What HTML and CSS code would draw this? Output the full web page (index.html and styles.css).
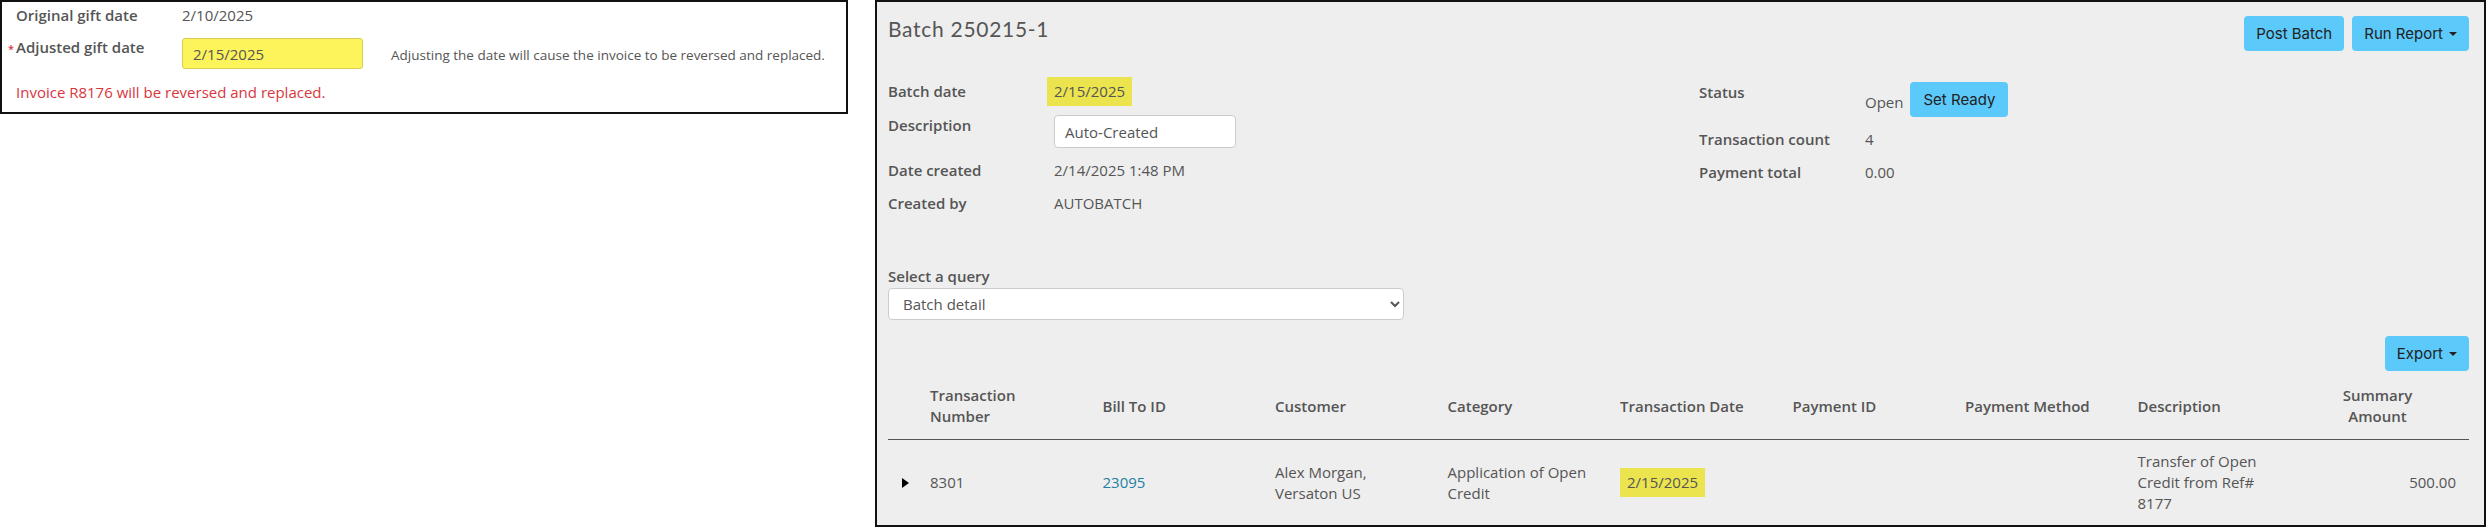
FILE: index.html
```html
<!DOCTYPE html>
<html lang="en">

<head>
  <meta charset="UTF-8" />
  <meta name="viewport" content="width=device-width, initial-scale=1.0" />
  <link rel="stylesheet" href="styles.css">
  <title>Batch 250215-1</title>
</head>

<body>
  <div class="gift-panel">
    <div class="gift-row">
      <span class="gift-label">Original gift date</span>
      <span class="gift-value">2/10/2025</span>
    </div>
    <div class="gift-row adjusted">
      <span class="gift-label required">Adjusted gift date</span>
      <input class="date-input" type="text" value="2/15/2025">
      <span class="gift-help">Adjusting the date will cause the invoice to be reversed and replaced.</span>
    </div>
    <div class="gift-warning">Invoice R8176 will be reversed and replaced.</div>
  </div>

  <div class="batch-panel">
    <div class="batch-header">
      <h1 class="batch-title">Batch 250215-1</h1>
      <div class="actions">
        <button class="btn">Post Batch</button>
        <button class="btn">Run Report <span class="caret"></span></button>
      </div>
    </div>

    <div class="info">
      <div class="info-col">
        <div class="info-row first">
          <span class="info-label">Batch date</span>
          <span class="info-value"><mark class="hl">2/15/2025</mark></span>
        </div>
        <div class="info-row top">
          <span class="info-label">Description</span>
          <input class="desc-input" type="text" value="Auto-Created">
        </div>
        <div class="info-row">
          <span class="info-label">Date created</span>
          <span class="info-value">2/14/2025 1:48 PM</span>
        </div>
        <div class="info-row">
          <span class="info-label">Created by</span>
          <span class="info-value">AUTOBATCH</span>
        </div>
      </div>
      <div class="info-col right">
        <div class="info-row top">
          <span class="info-label">Status</span>
          <span class="info-value status">Open <button class="btn">Set Ready</button></span>
        </div>
        <div class="info-row">
          <span class="info-label">Transaction count</span>
          <span class="info-value">4</span>
        </div>
        <div class="info-row">
          <span class="info-label">Payment total</span>
          <span class="info-value">0.00</span>
        </div>
      </div>
    </div>

    <div class="query">
      <label class="info-label" for="query">Select a query</label>
      <select id="query" class="query-select">
        <option>Batch detail</option>
      </select>
    </div>

    <div class="export-bar">
      <button class="btn">Export <span class="caret"></span></button>
    </div>

    <table class="tx-table">
      <colgroup>
        <col class="c-toggle">
        <col class="c-mid" span="8">
        <col>
      </colgroup>
      <thead>
        <tr>
          <th></th>
          <th>Transaction<br>Number</th>
          <th>Bill To ID</th>
          <th>Customer</th>
          <th>Category</th>
          <th>Transaction Date</th>
          <th>Payment ID</th>
          <th>Payment Method</th>
          <th>Description</th>
          <th class="amount-head">Summary<br>Amount</th>
        </tr>
      </thead>
      <tbody>
        <tr>
          <td><span class="toggle"></span></td>
          <td>8301</td>
          <td><a class="link" href="#">23095</a></td>
          <td>Alex Morgan,<br>Versaton US</td>
          <td>Application of Open<br>Credit</td>
          <td><mark class="hl">2/15/2025</mark></td>
          <td></td>
          <td></td>
          <td>Transfer of Open<br>Credit from Ref#<br>8177</td>
          <td class="amount">500.00</td>
        </tr>
      </tbody>
    </table>
  </div>
</body>

</html>
```
FILE: styles.css
```css
* {
  box-sizing: border-box;
  padding: 0;
  margin: 0;
}

body {
  display: flex;
  align-items: flex-start;
  background: #fff;
  font-family: "Open Sans", "Liberation Sans", sans-serif;
  font-size: 15px;
  line-height: 21px;
  color: #555;
}

/* left: gift date card */
.gift-panel {
  width: 848px;
  height: 114px;
  border: 2px solid #111;
  padding: 3px 0 0 14px;
}

.gift-row {
  display: flex;
  align-items: flex-start;
}

.gift-label {
  width: 166px;
  flex-shrink: 0;
  font-weight: 600;
  position: relative;
}

.gift-label.required::before {
  content: "*";
  position: absolute;
  left: -8px;
  top: 1px;
  color: #d9363e;
  font-size: 11px;
}

.gift-row.adjusted {
  margin-top: 11px;
}

.date-input {
  width: 181px;
  height: 31px;
  margin-top: 1px;
  padding: 0 10px;
  font: inherit;
  color: #555;
  background: #fdf45c;
  border: 1px solid #d8cd55;
  border-radius: 3px;
}

.gift-help {
  margin: 8px 0 0 28px;
  font-size: 13.5px;
}

.gift-warning {
  margin-top: 13px;
  color: #d9363e;
}

/* right: batch details */
.batch-panel {
  margin-left: 27px;
  width: 1611px;
  height: 527px;
  background: #eee;
  border: 2px solid #111;
  padding: 14px 15px 0 11px;
}

.batch-header {
  display: flex;
  justify-content: space-between;
  align-items: flex-start;
}

.batch-title {
  font-family: Lato, "Open Sans", sans-serif;
  font-weight: 400;
  font-size: 21px;
  letter-spacing: 0.7px;
  line-height: 28px;
  margin-top: -1px;
  color: #555;
}

.actions {
  display: flex;
  gap: 8px;
}

.btn {
  font-family: Inter, "Open Sans", sans-serif;
  font-size: 15px;
  color: #222;
  background: #5bc9f9;
  border: none;
  border-radius: 4px;
  height: 35px;
  padding: 0 12px;
  display: inline-flex;
  align-items: center;
  gap: 6px;
}

.caret {
  width: 0;
  height: 0;
  border-left: 4px solid transparent;
  border-right: 4px solid transparent;
  border-top: 4px solid #222;
}

.info {
  display: flex;
  margin-top: 26px;
}

.info-col {
  width: 811px;
  flex-shrink: 0;
}

.info-col.right {
  flex: 1;
  width: auto;
  margin-top: 5px;
}

.info-row {
  display: flex;
  align-items: center;
  margin-bottom: 12px;
}

.info-row.first {
  margin-bottom: 9px;
}

.info-row.top {
  align-items: flex-start;
}

.info-label {
  width: 166px;
  font-weight: 600;
  flex-shrink: 0;
}

.hl {
  display: inline-block;
  background: #ece44f;
  color: #555;
  padding: 4px 7px;
}

.info-value .hl {
  margin-left: -7px;
}

.desc-input {
  width: 182px;
  height: 33px;
  padding: 0 10px;
  font: inherit;
  color: #555;
  background: #fff;
  border: 1px solid #ccc;
  border-radius: 4px;
}

.status {
  display: flex;
  align-items: center;
  gap: 7px;
  margin-top: 6px;
}

.status .btn {
  margin-top: -6px;
  padding: 0 13px;
}

.query {
  display: flex;
  flex-direction: column;
  margin-top: 40px;
}

.query-select {
  width: 516px;
  height: 32px;
  margin-top: 1px;
  padding: 0 10px;
  font: inherit;
  color: #555;
  background: #fff;
  border: 1px solid #ccc;
  border-radius: 4px;
}

.export-bar {
  display: flex;
  justify-content: flex-end;
  margin-top: 16px;
}

.tx-table {
  width: 1581px;
  margin-top: 6px;
  border-collapse: collapse;
  table-layout: fixed;
}

.c-toggle {
  width: 34px;
}

.c-mid {
  width: 172.5px;
}

.tx-table th {
  font-weight: 600;
  text-align: left;
  vertical-align: middle;
  padding: 8px 8px 12px;
  border-bottom: 1px solid #555;
}

.tx-table th.amount-head {
  text-align: center;
  padding-right: 24px;
}

.tx-table td {
  vertical-align: middle;
  padding: 11px 8px 8px;
}

.tx-table td.amount {
  text-align: right;
  padding-right: 13px;
}

.toggle {
  display: block;
  margin-left: 6px;
  width: 0;
  height: 0;
  border-top: 5px solid transparent;
  border-bottom: 5px solid transparent;
  border-left: 7px solid #000;
}

.link {
  color: #1f7fa3;
  text-decoration: none;
}
```
